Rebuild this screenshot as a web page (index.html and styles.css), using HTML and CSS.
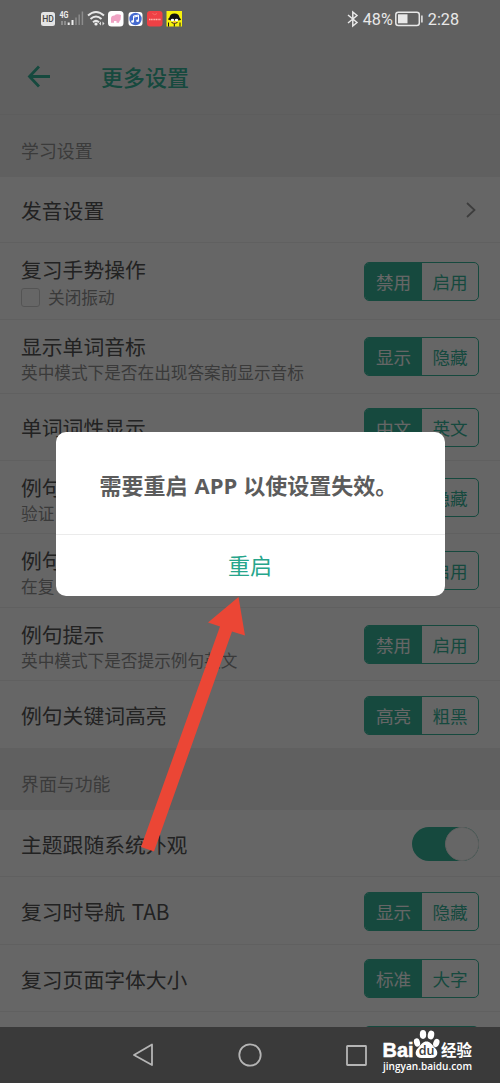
FILE: index.html
```html
<!DOCTYPE html>
<html lang="zh-CN">
<head>
<meta charset="UTF-8">
<meta name="viewport" content="width=device-width, initial-scale=1.0">
<title>更多设置</title>
<link rel="stylesheet" href="styles.css">
</head>
<body>
<div class="phone">
    <header class="header">
        <svg class="back" width="24" height="24" viewBox="0 0 24 24"><path d="M12 2.500L2.500 12.500L12 22.500M2.500 12.500H23"/></svg>
        <h1 class="header-title">更多设置</h1>
    </header>
    <main class="settings">
        <h2 class="section-title">学习设置</h2>
        <div class="row h66">
            <div class="row-title">发音设置</div>
            <svg class="chevron" width="10" height="16" viewBox="0 0 10 16"><path d="M1 1L8.5 8L1 15"/></svg>
        </div>
        <div class="row h77">
            <div class="row-text">
                <div class="row-title">复习手势操作</div>
                <div class="row-sub"><span class="checkbox"></span>关闭振动</div>
            </div>
            <div class="segment"><span class="on">禁用</span><span>启用</span></div>
        </div>
        <div class="row h73">
            <div class="row-text">
                <div class="row-title">显示单词音标</div>
                <div class="row-sub">英中模式下是否在出现答案前显示音标</div>
            </div>
            <div class="segment"><span class="on">显示</span><span>隐藏</span></div>
        </div>
        <div class="row h67">
            <div class="row-title">单词词性显示</div>
            <div class="segment"><span class="on">中文</span><span>英文</span></div>
        </div>
        <div class="row h73">
            <div class="row-text">
                <div class="row-title">例句</div>
                <div class="row-sub">验证</div>
            </div>
            <div class="segment"><span class="on">显示</span><span>隐藏</span></div>
        </div>
        <div class="row h73">
            <div class="row-text">
                <div class="row-title">例句</div>
                <div class="row-sub">在复</div>
            </div>
            <div class="segment"><span class="on">禁用</span><span>启用</span></div>
        </div>
        <div class="row h73">
            <div class="row-text">
                <div class="row-title">例句提示</div>
                <div class="row-sub">英中模式下是否提示例句英文</div>
            </div>
            <div class="segment"><span class="on">禁用</span><span>启用</span></div>
        </div>
        <div class="row h67 last">
            <div class="row-title">例句关键词高亮</div>
            <div class="segment"><span class="on">高亮</span><span>粗黑</span></div>
        </div>
        <h2 class="section-title">界面与功能</h2>
        <div class="row h67">
            <div class="row-title">主题跟随系统外观</div>
            <div class="switch"><div class="knob"></div></div>
        </div>
        <div class="row h68">
            <div class="row-title">复习时导航 TAB</div>
            <div class="segment"><span class="on">显示</span><span>隐藏</span></div>
        </div>
        <div class="row h67">
            <div class="row-title">复习页面字体大小</div>
            <div class="segment"><span class="on">标准</span><span>大字</span></div>
        </div>
        <div class="row h67">
            <div class="segment"><span class="on"></span><span></span></div>
        </div>
    </main>

    <div class="overlay">
        <div class="dialog">
            <p class="dialog-text">需要重启 <span class="latin">APP</span> 以使设置失效。</p>
            <button class="dialog-btn">重启</button>
        </div>
    </div>

    <div class="status-bar">
        <div class="status-left">
            <svg width="150" height="20" viewBox="0 0 150 20">
                <rect x="1" y="3" width="14" height="14" rx="2.500" fill="#e4e4e4"/>
                <text x="8" y="13" class="hd">HD</text>
                <text x="19.500" y="8.500" class="net" textLength="9" lengthAdjust="spacingAndGlyphs">4G</text>
                <path d="M22 12v4M25 12v4" stroke="#aaa" stroke-width="1.200"/>
                <path d="M28.700 13.500V16M32.500 11V16" stroke="#eee" stroke-width="2"/>
                <path d="M36 8.500V16M39.200 5.500V16M42.400 2.500V16" stroke="#8c8c8c" stroke-width="1.500"/>
                <g fill="none" stroke="#e8e8e8" stroke-width="2">
                    <path d="M48 6.500Q56 -0.500 64 6.500"/>
                    <path d="M50.500 10Q56 5 61.500 10"/>
                    <path d="M53 13.300Q56 10.500 59 13.300"/>
                </g>
                <circle cx="56" cy="15" r="1.600" fill="#eee"/>
                <path d="M59 14.500l2-2v4zM64.500 14.500l-2-2v4z" fill="#ddd"/>
                <rect x="68" y="2" width="15.500" height="15.500" rx="3.500" fill="#fff"/>
                <path d="M71 13.800V9.500Q71 6.500 74.500 6.500Q76 4.500 79.500 5.500L81 6L80.500 11Q79.500 11 79 13.800H76.500V12H74V13.800Z" fill="#f0a3c4"/>
                <rect x="88.500" y="3" width="14" height="14" rx="3" fill="#fff"/>
                <circle cx="95.500" cy="10" r="6.200" fill="#466bd0"/>
                <path d="M93.500 12.300V7L98.500 6V11.500M93.500 8.200L98.500 7" stroke="#fff" fill="none"/>
                <ellipse cx="92.600" cy="12.500" rx="1.400" ry="1.200" fill="#fff"/>
                <ellipse cx="97.600" cy="11.700" rx="1.400" ry="1.200" fill="#fff"/>
                <rect x="107" y="2" width="15.500" height="15.500" rx="3" fill="#ee4145"/>
                <path d="M109 10.500H121" stroke="#ffb8ae" stroke-width="1.300" stroke-dasharray="1.200 .5"/>
                <path d="M112.500 4.500Q114.700 7 117 4.500" stroke="#f9766e" stroke-width=".8" fill="none"/>
                <rect x="126.500" y="2" width="15.500" height="15.500" fill="#f8f20b"/>
                <path d="M128 10.500Q128.500 9 129.500 8.500Q130 4.500 134.500 4.500Q139 4.500 139.500 8.500Q140.500 9 141 11L137.500 11.500H131Z" fill="#111"/>
                <path d="M128.500 13.500v4M140 13.500v4M134.300 14.500v3" stroke="#111"/>
                <ellipse cx="132.500" cy="11" rx="1.700" ry="1.200" fill="#fff"/>
                <ellipse cx="136.500" cy="11" rx="1.700" ry="1.200" fill="#fff"/>
                <path d="M131.500 13.500Q134.500 15.500 137.500 13.500" stroke="#222" fill="none"/>
                <path d="M133 13.500h3" stroke="#f49c35" stroke-width="1.300"/>
            </svg>
        </div>
        <div class="status-right">
            <svg width="12" height="18" viewBox="0 0 12 18"><path d="M1 5L10 12.500L5.800 16V2L10 5.500L1 13"/></svg>
            <span class="percent">48%</span>
            <svg width="28" height="16" viewBox="0 0 28 16">
                <rect x=".8" y="1.200" width="23.500" height="13.200" rx="2.500"/>
                <rect class="fill" x="3" y="3.300" width="9.500" height="9"/>
                <path d="M26.900 4.500v7"/>
            </svg>
            <span class="time">2:28</span>
        </div>
    </div>

    <nav class="nav-bar">
        <svg width="21" height="24" viewBox="0 0 21 24"><path d="M19 1.500V22L1 12Z"/></svg>
        <svg width="24" height="24" viewBox="0 0 24 24"><circle cx="12" cy="12" r="10.700"/></svg>
        <svg width="21" height="21" viewBox="0 0 21 21"><rect x="1" y="1" width="19" height="19" rx=".5"/></svg>
    </nav>

    <svg class="arrow" width="106" height="258" viewBox="0 0 106 258">
        <path d="M98.500 1L105 39.500L92 35.500L14 255.500L1 251L80 30.500L68 26.500Z"/>
    </svg>

    <svg class="watermark" width="100" height="50" viewBox="0 0 100 50">
        <text class="wm-big" x="1.500" y="28.500" textLength="31" lengthAdjust="spacingAndGlyphs">Bai</text>
        <g fill="#fff">
            <ellipse cx="36" cy="14.500" rx="3" ry="4.200" transform="rotate(-15 36 14.500)"/>
            <ellipse cx="42" cy="6.500" rx="3.200" ry="4.400"/>
            <ellipse cx="50" cy="7" rx="3.200" ry="4.400" transform="rotate(12 50 7)"/>
            <ellipse cx="55.300" cy="15" rx="3" ry="4.200" transform="rotate(20 55.300 15)"/>
            <path d="M45.500 13.500C49 13.500 50.500 16 53.500 19.500C58.500 24 56.500 30 50.500 30H40.500C34.500 30 32.500 24 37.500 19.500C40.500 16 42 13.500 45.500 13.500Z"/>
        </g>
        <text class="wm-du" x="45.500" y="27">du</text>
        <text class="wm-cn" x="60" y="28" textLength="31" lengthAdjust="spacingAndGlyphs">经验</text>
        <text class="wm-url" x="2" y="42" textLength="89" lengthAdjust="spacingAndGlyphs">jingyan.baidu.com</text>
    </svg>
</div>
</body>
</html>
```
FILE: styles.css
```css
:root {
    --primary-color: #37b69c;
    --text-color: #555;
    --sub-color: #929292;
    --line-color: #f0f0f0;
    --section-color: #f1f1f1;
}
* {
    box-sizing: border-box;
}
body {
    margin: 0;
    font-family: "Noto Sans CJK SC", sans-serif;
    color: var(--text-color);
}
.phone {
    position: relative;
    width: 500px;
    height: 1083px;
    overflow: hidden;
    background-color: #fff;
    display: flex;
    flex-direction: column;
}
.header {
    flex: none;
    height: 115px;
    padding: 38px 0 0 27px;
    display: flex;
    align-items: center;
    background-color: var(--section-color);
    border-bottom: 1px solid #e8e8e8;
}
.back {
    fill: none;
    stroke: var(--primary-color);
    stroke-width: 2.8;
}
.header-title {
    margin: 0 0 0 50px;
    font-size: 22px;
    font-weight: 500;
    color: var(--primary-color);
}
.settings {
    flex: 1;
    min-height: 0;
    overflow: hidden;
}
.section-title {
    margin: 0;
    height: 62px;
    padding: 9px 21px 0;
    line-height: 53px;
    font-size: 17.9px;
    font-weight: 400;
    color: #949494;
    background-color: var(--section-color);
}
.row {
    display: flex;
    align-items: center;
    justify-content: space-between;
    padding: 1px 21px 0;
    border-bottom: 1px solid var(--line-color);
}
.row.last {
    border-bottom: none;
}
.h66 { height: 66px; }
.h67 { height: 67px; }
.h68 { height: 68px; }
.h73 { height: 73.5px; }
.h77 { height: 77px; }
.row-text {
    padding-top: 3px;
}
.row-title {
    font-size: 20.8px;
    line-height: 28px;
    word-spacing: 2px;
}
.row-sub {
    display: flex;
    align-items: center;
    font-size: 16.65px;
    line-height: 24px;
    color: var(--sub-color);
}
.h77 .row-sub {
    line-height: 28px;
}
.checkbox {
    width: 19px;
    height: 19px;
    margin-right: 8px;
    border: 1px solid #d2d2d2;
    border-radius: 3px;
}
.chevron {
    margin-right: 3px;
    fill: none;
    stroke: #999;
    stroke-width: 1.8;
}
.segment {
    display: flex;
    flex: none;
    width: 115px;
    height: 39px;
    margin-left: auto;
    border: 1px solid var(--primary-color);
    border-radius: 5px;
    overflow: hidden;
}
.segment span {
    flex: 1;
    line-height: 37px;
    text-align: center;
    font-size: 17.6px;
    color: var(--primary-color);
}
.segment .on {
    flex: none;
    width: 57px;
    color: #fff;
    background-color: var(--primary-color);
}
.switch {
    display: flex;
    justify-content: flex-end;
    width: 67px;
    height: 34px;
    border-radius: 17px;
    background-color: var(--primary-color);
}
.knob {
    width: 34px;
    height: 34px;
    border: 1px solid #eee;
    border-radius: 50%;
    background-color: #fff;
}
.overlay {
    position: absolute;
    inset: 0;
    display: flex;
    align-items: flex-start;
    justify-content: center;
    padding-top: 432px;
    background-color: rgba(0, 0, 0, 0.6);
}
.dialog {
    width: 389px;
    height: 164px;
    border-radius: 10px;
    overflow: hidden;
    background-color: #fff;
    display: flex;
    flex-direction: column;
}
.dialog-text {
    margin: 0;
    height: 103px;
    padding-left: 44px;
    line-height: 104px;
    font-size: 22px;
    font-weight: 700;
    color: #5c5c5c;
    border-bottom: 1px solid #ebebeb;
}
.latin {
    font-family: "Open Sans", sans-serif;
    margin: 0 1px 0 2px;
}
.dialog-btn {
    flex: 1;
    padding: 0 0 3px;
    border: none;
    background: none;
    font-family: inherit;
    font-size: 22px;
    color: #26a58b;
}
.status-bar {
    position: absolute;
    top: 0;
    left: 0;
    right: 0;
    height: 38px;
    padding: 0 41px 0 40px;
    display: flex;
    align-items: center;
    justify-content: space-between;
}
.status-left, .status-right {
    display: flex;
    align-items: center;
}
.hd {
    font: 500 8.5px Roboto, sans-serif;
    text-anchor: middle;
    fill: #444;
}
.net {
    font: 700 8.5px Roboto, sans-serif;
    fill: #eee;
}
.status-right {
    color: #e8e8e8;
    font-family: Roboto, sans-serif;
    font-size: 16.2px;
}
.status-right svg {
    fill: none;
    stroke: #e8e8e8;
    stroke-width: 1.5;
}
.status-right .fill {
    fill: #e8e8e8;
    stroke: none;
}
.percent {
    margin: 0 2px 0 4px;
}
.time {
    margin-left: 5px;
}
.nav-bar {
    position: absolute;
    left: 0;
    right: 0;
    bottom: 0;
    height: 56px;
    padding: 0 133px;
    display: flex;
    align-items: center;
    justify-content: space-between;
    background-color: #3a3a3a;
}
.nav-bar svg {
    fill: none;
    stroke: #b5b5b5;
    stroke-width: 1.8;
    stroke-linejoin: round;
}
.arrow {
    position: absolute;
    left: 140px;
    top: 596px;
    fill: #eb4635;
}
.watermark {
    position: absolute;
    left: 381px;
    top: 1028px;
    fill: #fff;
}
.wm-big {
    font: 700 20px "Liberation Sans", sans-serif;
    stroke: #fff;
    stroke-width: .5;
}
.wm-du {
    font: 600 12.5px "Open Sans", sans-serif;
    text-anchor: middle;
    fill: #3a3a3a;
}
.wm-cn {
    font: 700 15.5px "Noto Sans CJK SC", sans-serif;
}
.wm-url {
    font: 600 11px "Open Sans", sans-serif;
}
```
